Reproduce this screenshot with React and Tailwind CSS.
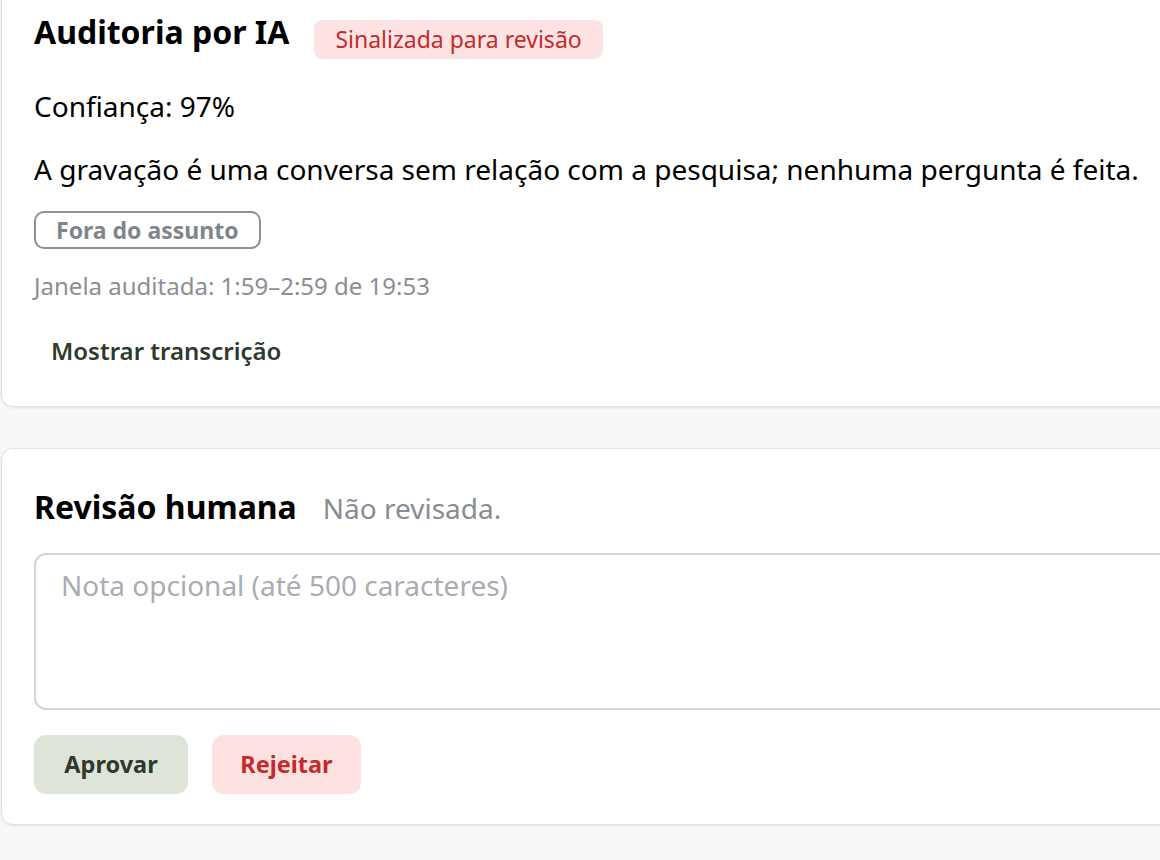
export default function App() {
    return (
        <div
            className="h-[860px] w-[1160px] overflow-hidden bg-[#f7f8fa]"
            style={{ fontFamily: '"Noto Sans", "Open Sans", sans-serif' }}
        >
            <div className="w-[1240px] pl-[1px]">
                {/* AI AUDIT */}
                <div className="-mt-[22px] rounded-[12px] border border-[#e1e3e7] bg-white px-[32px] pt-[35px] pb-[33px] shadow-[0_1px_3px_rgba(0,0,0,0.08)]">
                    <div className="flex items-start gap-[25px]">
                        <h2 className="text-[32px] font-bold leading-[36px] text-black">Auditoria por IA</h2>
                        <span className="mt-[6px] flex h-[39px] items-center rounded-[8px] bg-[#fde3e3] px-[21px] text-[23px] text-[#c42b2b]">
                            Sinalizada para revisão
                        </span>
                    </div>
                    <p className="mt-[29px] text-[28px] leading-[36px] text-black">Confiança: 97%</p>
                    <p className="mt-[27px] text-[28px] leading-[36px] text-black">
                        A gravação é uma conversa sem relação com a pesquisa; nenhuma pergunta é feita.
                    </p>
                    <div className="mt-[24px] flex">
                        <span className="flex h-[38px] items-center rounded-[10px] border-2 border-[#8c9199] px-[20px] text-[23px] font-bold text-[#80858d]">
                            Fora do assunto
                        </span>
                    </div>
                    <p className="mt-[21px] text-[24px] leading-[32px] text-[#8a8e95]">Janela auditada: 1:59–2:59 de 19:53</p>
                    <button className="mt-[27px] flex h-[44px] items-center rounded-[8px] px-[17px] text-[24px] font-semibold text-[#2e3a2b]">
                        Mostrar transcrição
                    </button>
                </div>

                {/* HUMAN REVIEW */}
                <div className="mt-[41px] rounded-[12px] border border-[#e1e3e7] bg-white px-[32px] pt-[40px] pb-[30px] shadow-[0_1px_3px_rgba(0,0,0,0.08)]">
                    <div className="flex items-baseline gap-[26px]">
                        <h2 className="text-[32px] font-bold leading-[36px] text-black">Revisão humana</h2>
                        <span className="text-[28px] leading-[36px] text-[#888c93]">Não revisada.</span>
                    </div>
                    <textarea
                        className="mt-[27px] block h-[157px] w-full resize-none rounded-[12px] border-2 border-[#d3d5db] px-[25px] py-[12px] text-[28px] leading-[36px] outline-none placeholder:text-[#a9adb3]"
                        placeholder="Nota opcional (até 500 caracteres)"
                    />
                    <div className="mt-[25px] flex gap-[24px]">
                        <button className="h-[59px] w-[154px] rounded-[12px] bg-[#dfe4d9] text-[23.5px] font-bold text-[#2e3a2b]">
                            Aprovar
                        </button>
                        <button className="h-[59px] w-[149px] rounded-[12px] bg-[#fee2e2] text-[23.5px] font-bold text-[#c42b2b]">
                            Rejeitar
                        </button>
                    </div>
                </div>
            </div>
        </div>
    );
}
